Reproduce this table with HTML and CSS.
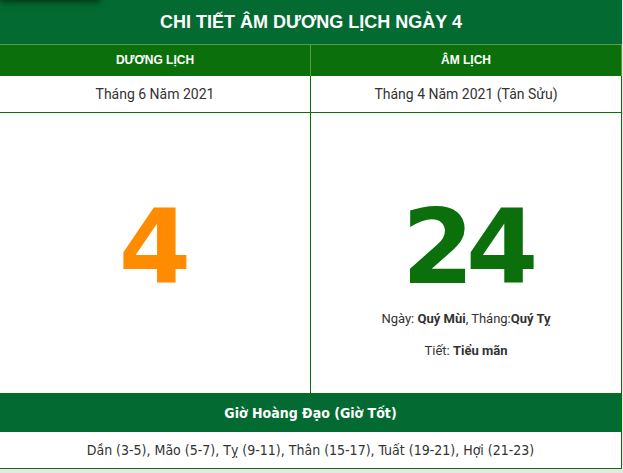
FILE: index.html
```html
<!DOCTYPE html>
<html lang="vi">
<head>
<meta charset="utf-8">
<title>Chi tiết âm dương lịch ngày 4</title>
<link rel="stylesheet" href="styles.css">
</head>
<body>
<div class="shadow"></div>
<div class="cal">
  <div class="title">CHI TIẾT ÂM DƯƠNG LỊCH NGÀY 4</div>
  <div class="grid">
    <div class="th">DƯƠNG LỊCH</div>
    <div class="th">ÂM LỊCH</div>
    <div class="td">Tháng 6 Năm 2021</div>
    <div class="td">Tháng 4 Năm 2021 (Tân Sửu)</div>
    <div class="day">
      <div class="num solar">4</div>
    </div>
    <div class="day">
      <div class="num lunar">24</div>
      <p class="info">Ngày: <b>Quý Mùi</b>, Tháng:<b>Quý Tỵ</b></p>
      <p class="info info2">Tiết: <b>Tiểu mãn</b></p>
    </div>
  </div>
  <div class="sub">Giờ Hoàng Đạo (Giờ Tốt)</div>
  <div class="hours">Dần (3-5), Mão (5-7), Tỵ (9-11), Thân (15-17), Tuất (19-21), Hợi (21-23)</div>
</div>
</body>
</html>
```
FILE: styles.css
```css
html, body {
  margin: 0;
  padding: 0;
}
body {
  background: #e6e6e6;
  position: relative;
  font-family: Roboto, "Liberation Sans", sans-serif;
  color: #333;
  height: 473px;
  overflow: hidden;
}
.shadow {
  position: absolute;
  top: -10px;
  left: 0;
  width: 100px;
  height: 10px;
  box-shadow: 0 2px 6px rgba(0, 0, 0, 0.55);
  z-index: 2;
}
.cal {
  width: 622px;
  background: #fff;
}
.title {
  height: 44px;
  line-height: 44px;
  background: #036b31;
  border-bottom: 1px solid #5f9a3c;
  color: #fff;
  text-align: center;
  font-family: "Liberation Sans", Arial, sans-serif;
  font-weight: bold;
  font-size: 18px;
}
.grid {
  display: grid;
  grid-template-columns: 311px 311px;
}
.th {
  height: 31px;
  line-height: 31px;
  background: #0b700b;
  color: #fff;
  text-align: center;
  font-family: "Liberation Sans", Arial, sans-serif;
  font-weight: bold;
  font-size: 12px;
  border-right: 1px solid #5f9a3c;
}
.td {
  height: 36px;
  line-height: 36px;
  text-align: center;
  font-size: 14px;
  border-right: 1px solid #0b700b;
  border-bottom: 1px solid #0b700b;
}
.day {
  padding-top: 82px;
  height: 198px;
  text-align: center;
  border-right: 1px solid #0b700b;
  border-bottom: 1px solid #0b700b;
}
.num {
  font-family: "DejaVu Sans", Verdana, sans-serif;
  font-weight: bold;
  font-size: 104px;
  line-height: 104px;
}
.solar { color: #ff8c00; }
.lunar {
  color: #0b700b;
  letter-spacing: -8px;
}
.info {
  margin: 10px 0 0;
  font-size: 13px;
  line-height: 20px;
}
.info2 { margin-top: 12px; }
.sub {
  height: 38px;
  line-height: 38px;
  background: #036b31;
  color: #fff;
  text-align: center;
  font-family: "DejaVu Sans Condensed", "DejaVu Sans", sans-serif;
  font-weight: bold;
  font-size: 14px;
  border-right: 1px solid #0b700b;
}
.hours {
  height: 36px;
  line-height: 36px;
  text-align: center;
  font-family: "DejaVu Sans Condensed", "DejaVu Sans", sans-serif;
  font-size: 14px;
  border-right: 1px solid #0b700b;
  border-bottom: 1px solid #0b700b;
}
```
